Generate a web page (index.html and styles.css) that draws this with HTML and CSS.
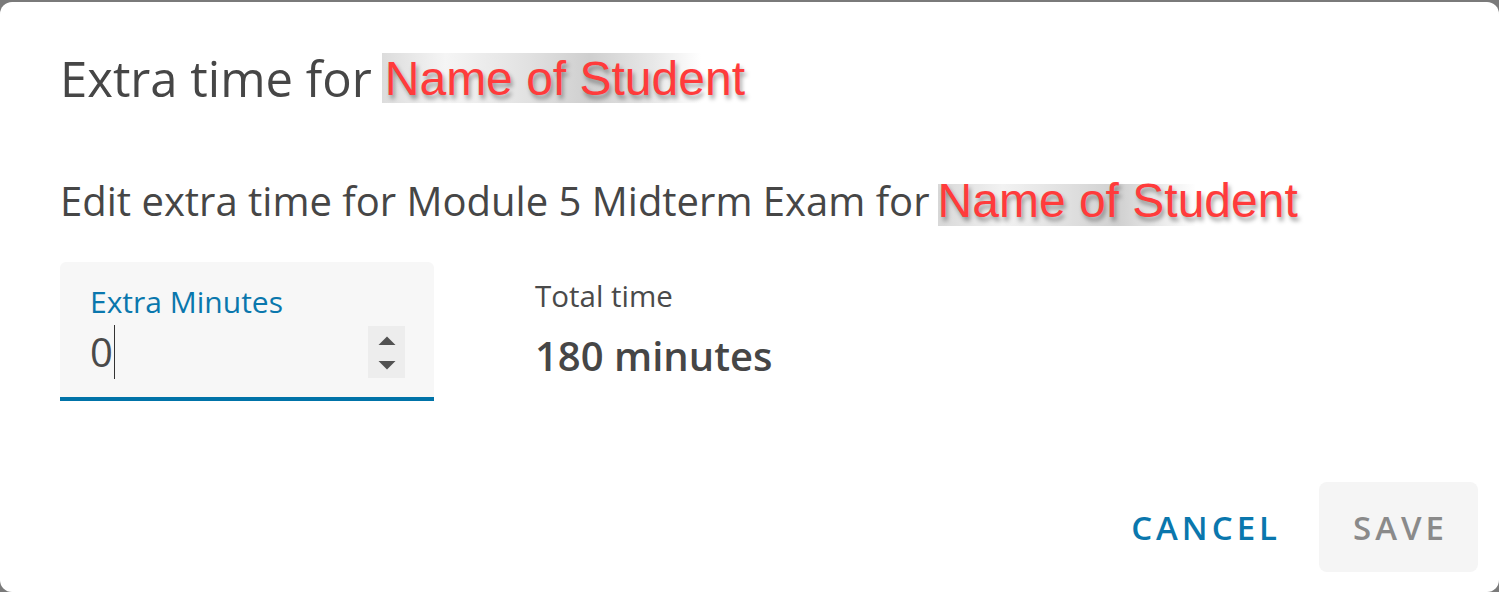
FILE: index.html
```html
<!DOCTYPE html>
<html>
<head>
<meta charset="utf-8">
<link rel="stylesheet" href="styles.css">
</head>
<body>
<div class="dialog">
  <h1 class="title">Extra time for<span class="name name-lg">Name of Student</span></h1>
  <p class="desc">Edit extra time for Module 5 Midterm Exam for<span class="name name-md">Name of Student</span></p>
  <div class="row">
    <div class="field">
      <div class="label">Extra Minutes</div>
      <div class="value-row">
        <span class="value">0</span><span class="caret"></span>
        <span class="spinner">
          <svg width="18" height="52" viewBox="0 0 18 52"><path d="M0.5 19 L9 10.5 L17.5 19 Z" fill="#525252"/><path d="M0.5 35 L17.5 35 L9 43.5 Z" fill="#525252"/></svg>
        </span>
      </div>
    </div>
    <div class="total">
      <div class="total-label">Total time</div>
      <div class="total-value">180 minutes</div>
    </div>
  </div>
  <div class="actions">
    <button class="btn btn-cancel">CANCEL</button>
    <button class="btn btn-save">SAVE</button>
  </div>
</div>
</body>
</html>
```
FILE: styles.css
```css
html, body {
  margin: 0;
  padding: 0;
  background: #7a7a7a;
  height: 592px;
  overflow: hidden;
}
.dialog {
  margin-top: 2px;
  height: 590px;
  box-sizing: border-box;
  background: #fff;
  border-radius: 12px;
  padding: 0 21px 20px 60px;
  font-family: "Open Sans", sans-serif;
  color: #464646;
  display: flex;
  flex-direction: column;
}
.title {
  margin: 44px 0 0 0;
  font-size: 49px;
  font-weight: 400;
  line-height: 64px;
  height: 64px;
  white-space: nowrap;
}
.name {
  font-family: "Liberation Sans", Arial, sans-serif;
  color: #ff3b3b;
  text-shadow: 2px 4px 4px rgba(0,0,0,0.35);
  display: inline-block;
  vertical-align: top;
}
.name-lg {
  font-size: 48px;
  line-height: 66px;
  margin-left: 10px;
  padding-left: 3px;
  background: linear-gradient(90deg, #dcdcdc 0%, #f5f5f5 20%, #e2e2e2 45%, #cfcfcf 65%, #e8e8e8 85%, #fff 100%);
  background-size: 319px 50px;
  background-repeat: no-repeat;
  background-position: 0 7px;
}
.desc {
  margin: 66px 0 0 0;
  font-size: 40px;
  line-height: 50px;
  height: 50px;
  white-space: nowrap;
}
.name-md {
  font-size: 48px;
  margin-left: 8px;
  background: linear-gradient(90deg, #d8d8d8 0%, #f2f2f2 25%, #e0e0e0 50%, #d0d0d0 70%, #f0f0f0 90%, #fff 100%);
  background-size: 258px 42px;
  background-repeat: no-repeat;
  background-position: 0 8px;
  line-height: 50px;
}
.row {
  display: flex;
  margin-top: 36px;
}
.field {
  width: 374px;
  height: 139px;
  box-sizing: border-box;
  background: #f7f7f7;
  border-radius: 6px 6px 0 0;
  border-bottom: 4px solid #0073a8;
  padding: 23px 29px 0 30px;
}
.label {
  color: #0a77ad;
  font-size: 30px;
  line-height: 34px;
}
.value-row {
  display: flex;
  align-items: center;
  margin-top: 6px;
}
.value {
  font-size: 40px;
  color: #4a4a4a;
  line-height: 50px;
}
.caret {
  width: 1px;
  height: 54px;
  background: #333;
  margin-left: 1px;
}
.spinner {
  margin-left: auto;
  width: 37px;
  height: 52px;
  background: #ededed;
  display: flex;
  align-items: center;
  justify-content: center;
}
.total {
  margin-left: 101px;
  padding-top: 16px;
}
.total-label {
  font-size: 29.5px;
  line-height: 36px;
  color: #4a4a4a;
}
.total-value {
  margin-top: 17px;
  font-size: 40px;
  font-weight: 600;
  line-height: 50px;
  color: #464646;
}
.actions {
  margin-top: auto;
  display: flex;
  justify-content: flex-end;
  align-items: center;
}
.btn {
  font-family: "Open Sans", sans-serif;
  font-size: 33px;
  font-weight: 600;
  letter-spacing: 4px;
  border: none;
  background: transparent;
  cursor: pointer;
}
.btn-cancel {
  color: #0a77ad;
  padding: 0 38px 0 30px;
  height: 90px;
}
.btn-save {
  color: #8a8a8a;
  background: #f5f5f5;
  border-radius: 8px;
  width: 159px;
  height: 90px;
  padding: 0 0 0 4px;
}
```
